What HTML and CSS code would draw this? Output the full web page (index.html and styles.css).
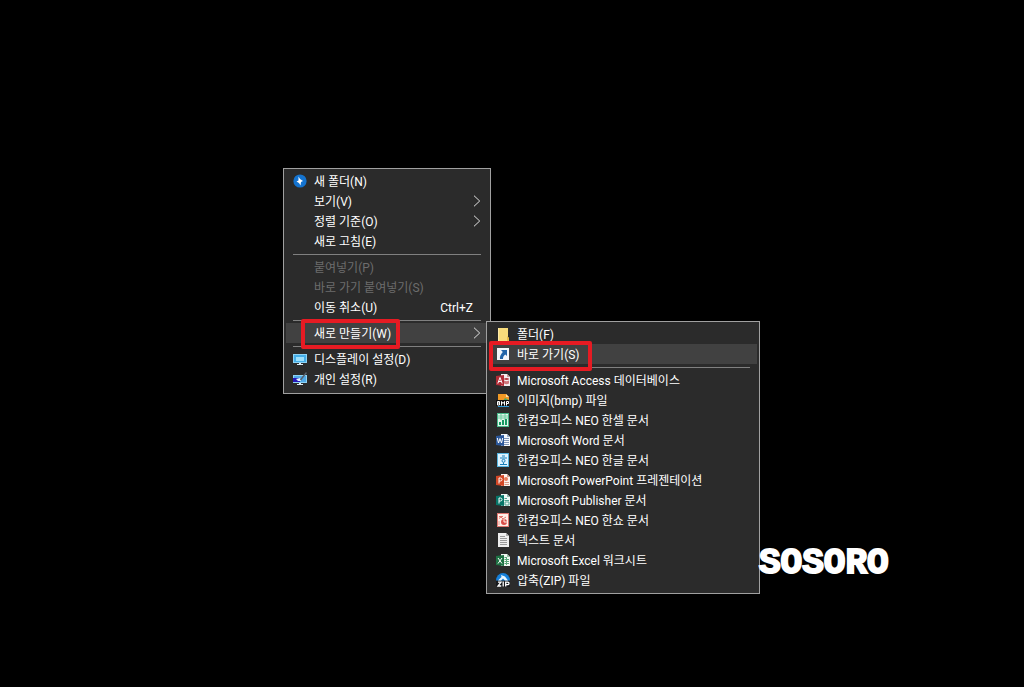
FILE: index.html
```html
<!DOCTYPE html>
<html lang="ko">

<head>
    <meta charset="UTF-8">
    <meta name="viewport" content="width=device-width, initial-scale=1.0">
    <link rel="stylesheet" href="styles.css">
    <title>바로 가기 만들기</title>
</head>

<body>
    <main class="desktop">
        <!-- Desktop context menu -->
        <div class="menu menu-main" role="menu">
            <button class="item" role="menuitem">
                <svg class="icon" viewBox="0 0 14 14"><circle cx="7" cy="7" r="6.6" fill="#1473cf"/><path d="M5.500 2.500l1.500 2.500 3 2-2 1-.5 3.500L6 9 3.500 7.500l2-1z" fill="#fff"/></svg>
                <span class="label">새 폴더(N)</span>
            </button>
            <button class="item" role="menuitem" aria-haspopup="true">
                <span class="icon"></span>
                <span class="label">보기(V)</span>
                <svg class="arrow" viewBox="0 0 8 12"><path d="M1 .7L6.7 6 1 11.3"/></svg>
            </button>
            <button class="item" role="menuitem" aria-haspopup="true">
                <span class="icon"></span>
                <span class="label">정렬 기준(O)</span>
                <svg class="arrow" viewBox="0 0 8 12"><path d="M1 .7L6.7 6 1 11.3"/></svg>
            </button>
            <button class="item" role="menuitem">
                <span class="icon"></span>
                <span class="label">새로 고침(E)</span>
            </button>
            <hr class="line">
            <button class="item" role="menuitem" disabled>
                <span class="icon"></span>
                <span class="label">붙여넣기(P)</span>
            </button>
            <button class="item" role="menuitem" disabled>
                <span class="icon"></span>
                <span class="label">바로 가기 붙여넣기(S)</span>
            </button>
            <button class="item" role="menuitem">
                <span class="icon"></span>
                <span class="label">이동 취소(U)</span>
                <span class="shortcut">Ctrl+Z</span>
            </button>
            <hr class="line">
            <button class="item active marked marked-new" role="menuitem" aria-haspopup="true" aria-expanded="true">
                <span class="icon"></span>
                <span class="label">새로 만들기(W)</span>
                <svg class="arrow" viewBox="0 0 8 12"><path d="M1 .7L6.7 6 1 11.3"/></svg>
            </button>
            <hr class="line">
            <button class="item" role="menuitem">
                <svg class="icon" viewBox="0 0 14 14"><path d="M0 2h14v9H0z" fill="#8ed3f4"/><path d="M1 3h12v7H1z" fill="#45aee8"/><path d="M3 5h8v4H3z" fill="#9ee0fb"/><path d="M6 11h2v1h2v1H4v-1h2z" fill="#dcecf4"/></svg>
                <span class="label">디스플레이 설정(D)</span>
            </button>
            <button class="item" role="menuitem">
                <svg class="icon" viewBox="0 0 14 14"><path d="M0 3h14v8H0z" fill="#8ed3f4"/><path d="M1 4h12v6H1z" fill="#4fa9e6"/><path d="M0 6h7v4H0z" fill="#2518b8"/><path d="M3 7l4-1 1 3H5z" fill="#dff3ff"/><path d="M13.500.500L7.500 8" stroke="#59636e" stroke-width="1.500"/><path d="M6 11h2v1h2v1H4v-1h2z" fill="#dcecf4"/></svg>
                <span class="label">개인 설정(R)</span>
            </button>
        </div>

        <!-- "New" submenu -->
        <div class="menu menu-new" role="menu">
            <button class="item" role="menuitem">
                <svg class="icon" viewBox="0 0 14 14"><path d="M2 1h10v9l1 1v3H2z" fill="#f8dc7c"/><path d="M11 9l2 2v3h-2z" fill="#e7bd4c"/><path d="M2 1h1v13H2z" fill="#ffebaa"/></svg>
                <span class="label">폴더(F)</span>
            </button>
            <button class="item active marked marked-link" role="menuitem">
                <svg class="icon" viewBox="0 0 14 14"><path d="M1 1h12v12H1z" fill="#f4f7fa"/><path d="M5 3h6v6L9.300 7.500C7.500 9 7 10 7 12H4C3.500 9.500 4.800 7.500 6.800 5z" fill="#2365a8"/></svg>
                <span class="label">바로 가기(S)</span>
            </button>
            <hr class="line">
            <button class="item" role="menuitem">
                <svg class="icon" viewBox="0 0 14 14"><path d="M5 1h6l3 3v9H5z" fill="#f3eeee"/><path d="M11 1v3h3" fill="#c99"/><ellipse cx="10.500" cy="6" rx="2.500" ry="1" fill="#b33b42"/><path d="M8 7.500q2.500 1.500 5 0v3q-2.500 1.500-5 0z" fill="#cf777b"/><path d="M0 3l8-1v11l-8-1z" fill="#b12c36"/><path d="M1.800 10.500L4 4.500l2.200 6M2.700 8.500h2.600" stroke="#fff" fill="none"/></svg>
                <span class="label">Microsoft Access 데이터베이스</span>
            </button>
            <button class="item" role="menuitem">
                <svg class="icon" viewBox="0 0 14 14"><path d="M2 1h8l3 3v4H2z" fill="#f29a26"/><path d="M10 1v3h3z" fill="#ffe1a8"/><path d="M7 8l2-3 4 2v2H7z" fill="#53a65f"/><path d="M0 7h13v6H0z" fill="#111"/><path d="M1.500 12V8.500h2V12h-2m0-2h2M5.500 12.500V8.500L7 10.500l1.500-2v4M10.500 12.500v-4h2v2h-2" stroke="#fff" fill="none"/><path d="M2 13.500h11" stroke="#2f9ad7"/></svg>
                <span class="label">이미지(bmp) 파일</span>
            </button>
            <button class="item" role="menuitem">
                <svg class="icon" viewBox="0 0 14 14"><path d="M1 0h12v14H1z" fill="#49b88a"/><path d="M2 1h10v12H2z" fill="#e2f7ec"/><path d="M2 3h10M2 5h10M5 1v6M9 1v6" stroke="#70cba2"/><path d="M3 9h2v3H3zM6 7h2v5H6zM9 6h2v6H9z" fill="#159a62"/></svg>
                <span class="label">한컴오피스 NEO 한셀 문서</span>
            </button>
            <button class="item" role="menuitem">
                <svg class="icon" viewBox="0 0 14 14"><path d="M5 1h6l3 3v9H5z" fill="#f5f8fc"/><path d="M11 1v3h3" fill="#9cb1cf"/><path d="M8 5.500h5M8 7.500h5M8 9.500h5M8 11.500h5" stroke="#8096b8"/><path d="M0 3l8-1v11l-8-1z" fill="#2b579a"/><path d="M1.300 5l1.200 5L4 5.500 5.500 10l1.200-5" stroke="#fff" fill="none"/></svg>
                <span class="label">Microsoft Word 문서</span>
            </button>
            <button class="item" role="menuitem">
                <svg class="icon" viewBox="0 0 14 14"><path d="M1 0h12v14H1z" fill="#55b4df"/><path d="M2 1h10v12H2z" fill="#dff4ff"/><path d="M6 3h3M4 5h7M7.500 9.500v1.500M4 11.500h7" stroke="#187eb8" fill="none"/><circle cx="7.500" cy="7.800" r="1.500" fill="none" stroke="#187eb8"/></svg>
                <span class="label">한컴오피스 NEO 한글 문서</span>
            </button>
            <button class="item" role="menuitem">
                <svg class="icon" viewBox="0 0 14 14"><path d="M5 1h6l3 3v9H5z" fill="#fbf2ee"/><path d="M11 1v3h3" fill="#d5a08f"/><circle cx="10" cy="6" r="2" fill="#e77c5c"/><path d="M8.500 9.500H13M8.500 11.500H13" stroke="#d99b87"/><path d="M0 3l8-1v11l-8-1z" fill="#d24726"/><path d="M3 10.500V5h1.500q1.500 0 1.500 1.500T4.500 8H3" stroke="#fff" fill="none"/></svg>
                <span class="label">Microsoft PowerPoint 프레젠테이션</span>
            </button>
            <button class="item" role="menuitem">
                <svg class="icon" viewBox="0 0 14 14"><path d="M5 1h6l3 3v9H5z" fill="#eff8f6"/><path d="M11 1v3h3" fill="#8fb9b1"/><path d="M8.500 5.500H11M8.500 7.500H13M9 9h4v3H9z" stroke="#50a291" fill="none"/><path d="M0 3l8-1v11l-8-1z" fill="#077568"/><path d="M3 10.500V5h1.500q1.500 0 1.500 1.500T4.500 8H3" stroke="#fff" fill="none"/></svg>
                <span class="label">Microsoft Publisher 문서</span>
            </button>
            <button class="item" role="menuitem">
                <svg class="icon" viewBox="0 0 14 14"><path d="M1 0h12v14H1z" fill="#df7770"/><path d="M2 1h10v12H2z" fill="#fff0e9"/><path d="M3 3.500h4M3 5.500l2-1.500 2 2 3-2" stroke="#e2766b" fill="none"/><circle cx="8" cy="9" r="3" fill="#d94e49"/><path d="M8 9V6M8 9h3" stroke="#fff0e9"/><path d="M3 8v4" stroke="#e99b91"/></svg>
                <span class="label">한컴오피스 NEO 한쇼 문서</span>
            </button>
            <button class="item" role="menuitem">
                <svg class="icon" viewBox="0 0 14 14"><path d="M2 0h8l3 3v11H2z" fill="#eee"/><path d="M10 0v3h3z" fill="#aaa"/><path d="M4 3.500h5M4 5.500h7M4 7.500h7M4 9.500h7M4 11.500h7" stroke="#999"/></svg>
                <span class="label">텍스트 문서</span>
            </button>
            <button class="item" role="menuitem">
                <svg class="icon" viewBox="0 0 14 14"><path d="M5 1h6l3 3v9H5z" fill="#f1f8f3"/><path d="M11 1v3h3" fill="#9abfa8"/><path d="M8.500 4.500H10M8.500 6.500H13M8.500 8.500H13M8.500 10.500H13M10.500 4v8" stroke="#5aa578"/><path d="M0 3l8-1v11l-8-1z" fill="#1f7244"/><path d="M2 5l4 5.500M6 5l-4 5.500" stroke="#fff"/></svg>
                <span class="label">Microsoft Excel 워크시트</span>
            </button>
            <button class="item" role="menuitem">
                <svg class="icon" viewBox="0 0 14 14"><path d="M0 7.500a7 7.500 0 0 1 14 0z" fill="#1680da"/><path d="M5 2l4 1.500 3 4H9L7 5.500 5 7.500H2L5.500 4z" fill="#e9f6ff"/><path d="M0 8h14v6H0z" fill="#17191c"/><path d="M2 9.200h3L2 13h3.300M7.200 8.500v5M9.700 13.500V9.200h2q1.300 0 1.300 1.200t-1.300 1.200h-2" stroke="#fff" stroke-width="1.300" fill="none"/></svg>
                <span class="label">압축(ZIP) 파일</span>
            </button>
        </div>

        <div class="watermark">SOSORO</div>
    </main>
</body>

</html>
```
FILE: styles.css
```css
body {
    margin: 0;
    background-color: #000;
    font-family: Roboto, "Noto Sans CJK KR", sans-serif;
}

.desktop {
    position: relative;
    min-height: 100vh;
    overflow: hidden;
}

.menu {
    position: absolute;
    box-sizing: border-box;
    padding: 2px 2px 3px;
    border: 1px solid #a0a0a0;
    background-color: #2b2b2b;
}

.menu-main {
    left: 283px;
    top: 168px;
    width: 208px;
    padding-bottom: 4px;
}

.menu-new {
    left: 486px;
    top: 321px;
    width: 274px;
}

.item {
    display: flex;
    align-items: center;
    gap: 7px;
    width: 100%;
    height: 20px;
    padding: 0 7px;
    border: none;
    background: none;
    color: #fff;
    font-family: inherit;
    font-size: 12px;
    line-height: 18px;
    text-align: left;
    white-space: nowrap;
}

.item:hover,
.item.active {
    background-color: #414141;
}

.item:disabled {
    background: none;
    color: #6d6d6d;
}

.icon {
    flex: none;
    width: 14px;
    height: 14px;
}

.label {
    flex: 1;
}

.label,
.shortcut {
    padding-top: 2px;
}

.shortcut {
    margin-right: 8px;
}

.arrow {
    flex: none;
    width: 8px;
    height: 12px;
    fill: none;
    stroke: #e0e0e0;
}

.line {
    height: 1px;
    margin: 3px 7px 2px;
    border: none;
    background-color: #808080;
}

/* Red frame around the item to click */
.marked {
    position: relative;
}

.marked::after {
    content: "";
    position: absolute;
    box-sizing: border-box;
    height: 30px;
    border: 4px solid #e61b23;
    border-radius: 2px;
}

.marked-new::after {
    top: -4px;
    left: 15px;
    width: 99px;
}

.marked-link::after {
    top: -3px;
    left: 0;
    width: 103px;
}

.watermark {
    position: absolute;
    left: 759px;
    top: 544px;
    color: #fff;
    font-family: "Liberation Mono", monospace;
    font-size: 36px;
    font-weight: bold;
    line-height: 40px;
    -webkit-text-stroke: 2px #fff;
}
```
